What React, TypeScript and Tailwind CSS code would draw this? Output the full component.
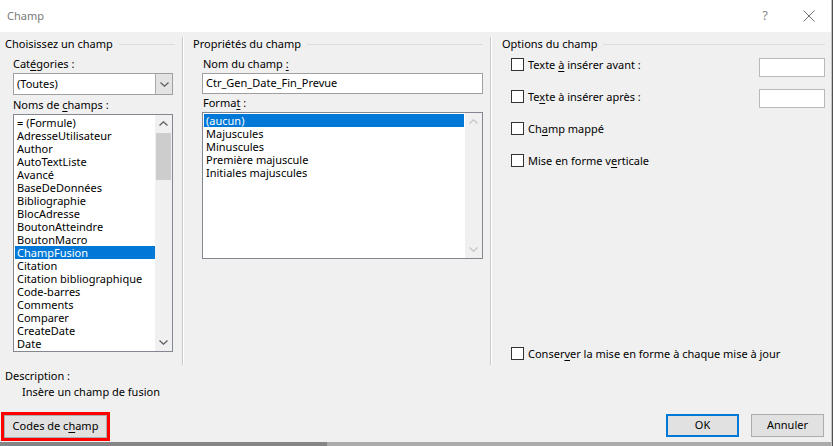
import React from 'react'

const fields = [
  '= (Formule)',
  'AdresseUtilisateur',
  'Author',
  'AutoTextListe',
  'Avancé',
  'BaseDeDonnées',
  'Bibliographie',
  'BlocAdresse',
  'BoutonAtteindre',
  'BoutonMacro',
  'ChampFusion',
  'Citation',
  'Citation bibliographique',
  'Code-barres',
  'Comments',
  'Comparer',
  'CreateDate',
  'Date',
]

const formats = ['(aucun)', 'Majuscules', 'Minuscules', 'Première majuscule', 'Initiales majuscules']

function U({ children }: { children: React.ReactNode }) {
  return <span className="underline underline-offset-2">{children}</span>
}

function Chevron({ up, light }: { up?: boolean; light?: boolean }) {
  return (
    <svg width="9" height="5" viewBox="0 0 9 5" fill="none">
      <polyline
        points={up ? '0.5,4.5 4.5,0.8 8.5,4.5' : '0.5,0.5 4.5,4.2 8.5,0.5'}
        stroke={light ? '#c6c6c6' : '#606060'}
        strokeWidth="1.3"
      />
    </svg>
  )
}

function GroupHeader({ title }: { title: string }) {
  return (
    <div className="flex items-center h-[14px] leading-[14px]">
      <span className="whitespace-nowrap">{title}</span>
      <div className="ml-[6px] h-px flex-1 bg-[#dcdcdc]" />
    </div>
  )
}

function Separator() {
  return (
    <div className="mt-[5px] h-[328px] flex">
      <div className="w-px bg-[#c9c9c9]" />
      <div className="w-px bg-white" />
    </div>
  )
}

function Check({ children, className }: { children: React.ReactNode; className?: string }) {
  return (
    <div className={`flex items-center gap-[4px] h-[13px] ${className ?? ''}`}>
      <div className="w-[13px] h-[13px] border border-[#333333] bg-white" />
      <span className="leading-[13px] whitespace-nowrap">{children}</span>
    </div>
  )
}

export default function App() {
  return (
    <div className="w-[833px] h-[446px] flex bg-[#f0f0f0] font-['Noto_Sans',sans-serif] text-[11px] text-black overflow-hidden">
      <div className="w-[831px] flex flex-col">
        {/* title bar */}
        <div className="h-[32px] bg-white flex items-center pl-[7px] pr-[16px] text-[#7a7a7a]">
          <span>Champ</span>
          <span className="ml-auto text-[13px] text-[#8a8a8a]">?</span>
          <svg className="ml-[35px]" width="12" height="12" viewBox="0 0 12 12">
            <path d="M0.5 0.5 L11.5 11.5 M11.5 0.5 L0.5 11.5" stroke="#6e6e6e" strokeWidth="1" />
          </svg>
        </div>

        <div className="flex h-[333px]">
          {/* Choisissez un champ */}
          <div className="w-[182px] pl-[5px] pr-[7px] pt-[5px] flex flex-col">
            <GroupHeader title="Choisissez un champ" />
            <div className="mt-[6px] ml-[8px] h-[14px] leading-[14px]">
              Cat<U>é</U>gories :
            </div>
            <div className="mt-[2px] ml-[8px] w-[160px] h-[22px] border border-[#a0a0a0] bg-white flex">
              <div className="flex-1 flex items-center pl-[3px]">(Toutes)</div>
              <div className="w-[17px] bg-[#e3e3e3] border-l border-[#a8a8a8] flex items-center justify-center">
                <Chevron />
              </div>
            </div>
            <div className="mt-[3px] ml-[8px] h-[14px] leading-[14px]">
              Noms de <U>c</U>hamps :
            </div>
            <div className="mt-[2px] ml-[8px] w-[160px] h-[238px] border border-[#828790] bg-white flex">
              <div className="flex-1 pt-px pl-px">
                {fields.map((f) => (
                  <div
                    key={f}
                    className={`h-[13px] leading-[13px] pl-[2px] whitespace-nowrap ${
                      f === 'ChampFusion' ? 'bg-[#0078d7] text-white' : ''
                    }`}
                  >
                    {f}
                  </div>
                ))}
              </div>
              <div className="w-[17px] bg-[#f0f0f0] flex flex-col">
                <div className="h-[17px] flex items-center justify-center">
                  <Chevron up />
                </div>
                <div className="flex-1 px-px">
                  <div className="mt-px h-[47px] bg-[#cdcdcd]" />
                </div>
                <div className="h-[17px] flex items-center justify-center">
                  <Chevron />
                </div>
              </div>
            </div>
          </div>

          <Separator />

          {/* Propriétés du champ */}
          <div className="w-[306px] pl-[9px] pr-[7px] pt-[5px] flex flex-col">
            <GroupHeader title="Propriétés du champ" />
            <div className="mt-[6px] ml-[10px] h-[14px] leading-[14px]">
              Nom du champ <U>:</U>
            </div>
            <div className="mt-[2px] ml-[9px] w-[281px] h-[21px] border border-[#a0a0a0] bg-white flex items-center pl-[3px]">
              Ctr_Gen_Date_Fin_Prevue
            </div>
            <div className="mt-[2px] ml-[10px] h-[14px] leading-[14px]">
              Forma<U>t</U> :
            </div>
            <div className="mt-[2px] ml-[9px] w-[281px] h-[147px] border border-[#828790] bg-white flex">
              <div className="flex-1 pt-px pl-px pr-px">
                {formats.map((f) => (
                  <div
                    key={f}
                    className={`h-[13px] leading-[13px] pl-[2px] whitespace-nowrap ${
                      f === '(aucun)' ? 'bg-[#0078d7] text-white' : ''
                    }`}
                  >
                    {f}
                  </div>
                ))}
              </div>
              <div className="w-[17px] bg-[#f0f0f0] flex flex-col justify-between">
                <div className="h-[17px] flex items-center justify-center">
                  <Chevron up light />
                </div>
                <div className="h-[17px] flex items-center justify-center">
                  <Chevron light />
                </div>
              </div>
            </div>
          </div>

          <Separator />

          {/* Options du champ */}
          <div className="flex-1 pl-[10px] pr-[6px] pt-[5px] flex flex-col">
            <GroupHeader title="Options du champ" />
            <div className="mt-[7px] ml-[9px] flex items-start h-[19px]">
              <Check>
                Texte <U>à</U> insérer avant :
              </Check>
              <div className="ml-auto w-[66px] h-[19px] border border-[#b9b9b9] bg-white" />
            </div>
            <div className="mt-[12px] ml-[9px] flex items-start h-[19px]">
              <Check className="mt-px">
                Te<U>x</U>te à insérer après :
              </Check>
              <div className="ml-auto w-[66px] h-[19px] border border-[#b9b9b9] bg-white" />
            </div>
            <Check className="mt-[14px] ml-[9px]">
              Ch<U>a</U>mp mappé
            </Check>
            <Check className="mt-[19px] ml-[9px]">
              Mise en forme v<U>e</U>rticale
            </Check>
            <Check className="mt-auto mb-[5px] ml-[9px]">
              Conser<U>v</U>er la mise en forme à chaque mise à jour
            </Check>
          </div>
        </div>

        {/* description */}
        <div className="h-[36px] pl-[5px] pt-[4px]">
          <div className="h-[14px] leading-[14px]">Description :</div>
          <div className="mt-[2px] pl-[17px] h-[14px] leading-[14px]">Insère un champ de fusion</div>
        </div>

        {/* buttons */}
        <div className="h-[41px] flex items-start pt-[11px] pl-px pr-[7px]">
          <div className="w-[109px] h-[29px] border-[3px] border-[#ff0000]">
            <div className="w-full h-full bg-[#e1e1e1] border border-[#adadad] flex items-center justify-center">
              Codes de c<U>h</U>amp
            </div>
          </div>
          <div className="ml-auto mt-[2px] w-[73px] h-[23px] border-2 border-[#0078d7] bg-[#e1e1e1] flex items-center justify-center">
            OK
          </div>
          <div className="ml-[12px] mt-[2px] w-[73px] h-[23px] border border-[#adadad] bg-[#e1e1e1] flex items-center justify-center">
            Annuler
          </div>
        </div>

        <div className="h-[4px] flex">
          <div className="w-[327px] bg-[#858585]" />
          <div className="flex-1 bg-[#aaaaaa]" />
        </div>
      </div>
      <div className="w-px bg-[#c4c4c4]" />
      <div className="w-px bg-[#4f4f4f]" />
    </div>
  )
}
